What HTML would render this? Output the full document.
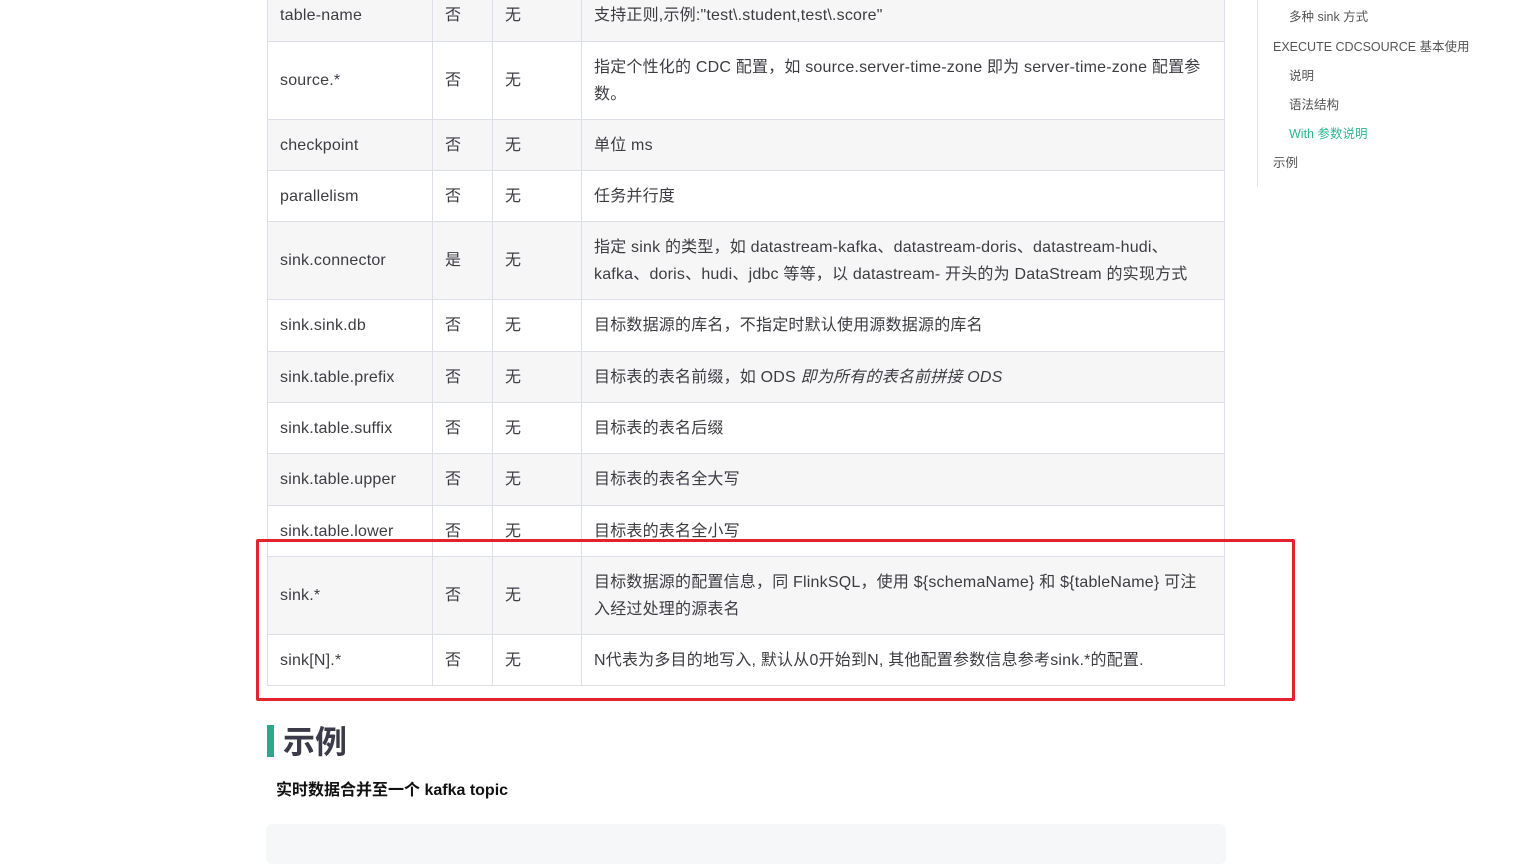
<!DOCTYPE html>
<html><head><meta charset="utf-8"><style>
body{margin:0;width:1521px;height:844px;overflow:hidden;background:#fff;font-family:"Liberation Sans","Noto Sans CJK SC",sans-serif;color:#3c3c43;position:relative}
table{position:absolute;left:267px;top:-11px;border-collapse:collapse;font-size:16px}
td{border:1px solid #dcdfe6;padding:0 12px;vertical-align:middle;line-height:27px;letter-spacing:0.2px}
tr:nth-child(odd){background:#f6f6f7}
.c1{width:140px}.c2{width:35px}.c3{width:64px}.c4{width:618px}
tr td:nth-child(4){letter-spacing:0.2px}
.side{position:absolute;left:1257px;top:0;height:187px;border-left:1px solid #e2e2e3;font-size:12.5px;color:#555}
.side div{position:absolute;white-space:nowrap}
</style></head><body>
<table>
<tr style="height:52px"><td class="c1">table-name</td><td class="c2">否</td><td class="c3">无</td><td class="c4">支持正则,示例:"test\.student,test\.score"</td></tr>
<tr style="height:78px"><td>source.*</td><td>否</td><td>无</td><td>指定个性化的 CDC 配置，如 source.server-time-zone 即为 server-time-zone 配置参<br>数。</td></tr>
<tr style="height:51px"><td>checkpoint</td><td>否</td><td>无</td><td>单位 ms</td></tr>
<tr style="height:51px"><td>parallelism</td><td>否</td><td>无</td><td>任务并行度</td></tr>
<tr style="height:78px"><td>sink.connector</td><td>是</td><td>无</td><td>指定 sink 的类型，如 datastream-kafka、datastream-doris、datastream-hudi、<br>kafka、doris、hudi、jdbc 等等，以 datastream- 开头的为 DataStream 的实现方式</td></tr>
<tr style="height:52px"><td>sink.sink.db</td><td>否</td><td>无</td><td>目标数据源的库名，不指定时默认使用源数据源的库名</td></tr>
<tr style="height:51px"><td>sink.table.prefix</td><td>否</td><td>无</td><td>目标表的表名前缀，如 ODS <i>即为所有的表名前拼接 ODS</i></td></tr>
<tr style="height:51px"><td>sink.table.suffix</td><td>否</td><td>无</td><td>目标表的表名后缀</td></tr>
<tr style="height:52px"><td>sink.table.upper</td><td>否</td><td>无</td><td>目标表的表名全大写</td></tr>
<tr style="height:51px"><td>sink.table.lower</td><td>否</td><td>无</td><td>目标表的表名全小写</td></tr>
<tr style="height:78px"><td>sink.*</td><td>否</td><td>无</td><td>目标数据源的配置信息，同 FlinkSQL，使用 ${schemaName} 和 ${tableName} 可注<br>入经过处理的源表名</td></tr>
<tr style="height:51px"><td>sink[N].*</td><td>否</td><td>无</td><td>N代表为多目的地写入, 默认从0开始到N, 其他配置参数信息参考sink.*的配置.</td></tr>
</table>
<div style="position:absolute;left:256px;top:539px;width:1033px;height:156px;border:3px solid #e3232c;border-radius:2px"></div>
<div style="position:absolute;left:267px;top:725px;width:7px;height:32px;background:#2ba98a"></div>
<div style="position:absolute;left:283px;top:720px;font-size:32px;font-weight:bold;color:#3a3a48;line-height:44px">示例</div>
<div style="position:absolute;left:276px;top:780px;font-size:16px;font-weight:bold;color:#111;line-height:22px">实时数据合并至一个 kafka topic</div>
<div style="position:absolute;left:266px;top:824px;width:960px;height:40px;background:#f6f7f8;border-radius:6px"></div>
<div class="side">
<div style="left:31px;top:6px">多种 sink 方式</div>
<div style="left:15px;top:36px">EXECUTE CDCSOURCE 基本使用</div>
<div style="left:31px;top:65px">说明</div>
<div style="left:31px;top:94px">语法结构</div>
<div style="left:31px;top:123px;color:#2bb98f">With 参数说明</div>
<div style="left:15px;top:152px">示例</div>
</div>
</body></html>
